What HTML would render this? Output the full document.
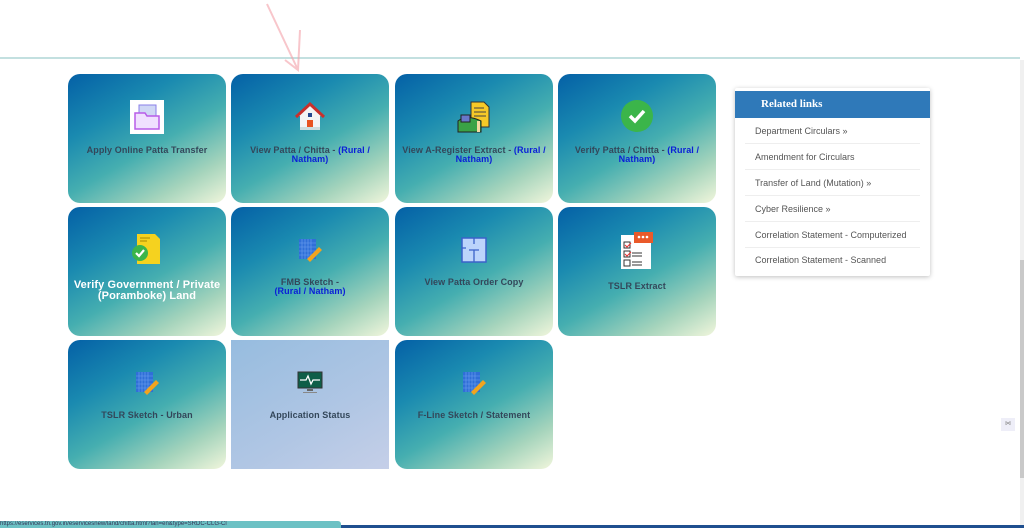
<!DOCTYPE html>
<html><head><meta charset="utf-8"><style>
*{margin:0;padding:0;box-sizing:border-box}
body{width:1024px;height:528px;background:#fff;position:relative;overflow:hidden;font-family:"Liberation Sans",Arial,sans-serif}
.topline{position:absolute;left:0;top:57px;width:1020px;height:2px;background:#c3e0e0}
.card{position:absolute;width:158px;height:129px;border-radius:12px;background:linear-gradient(150deg,#0460a6 0%,#1a8ab0 30%,#45aeb0 55%,#a6d4bc 80%,#f1f6dc 100%);text-align:center}
.card .ic{position:absolute;left:0;right:0;display:flex;justify-content:center}
.card .lb{position:absolute;left:4px;right:4px;font-size:9px;font-weight:bold;color:#33475a;line-height:9px;letter-spacing:.1px}
.b{color:#0a1fd8}
.status{background:linear-gradient(150deg,#96bcdf 0%,#b0c6e4 60%,#c5cfe8 100%);border-radius:0}
.panel{position:absolute;left:735px;top:88px;width:195px;height:188px;background:#fff;box-shadow:0 1px 5px rgba(0,0,0,.25);border-radius:2px}
.panel .hd{position:absolute;left:0;top:3px;width:195px;height:27px;background:#2f79b9;color:#fff;font-family:"Liberation Serif",serif;font-weight:bold;font-size:11px;line-height:27px;padding-left:26px}
.panel .it{position:absolute;left:10px;width:175px;height:26px;border-bottom:1px solid #eee;font-size:9px;color:#555;line-height:26px;padding-left:10px}
.sb{position:absolute;left:1020px;top:60px;width:4px;height:468px;background:#f0f0f0}
.sbt{position:absolute;left:1020px;top:260px;width:4px;height:218px;background:#c9c9c9}
</style></head><body>
<div class="topline"></div>
<svg style="position:absolute;left:255px;top:0" width="50" height="75"><path d="M12 4 L43 70 M45 30 L43 70 L30 60" stroke="#f3a0a8" stroke-width="2" fill="none" opacity=".6"/></svg>

<div class="card" style="left:68px;top:74px">
 <div class="ic" style="top:26px"><svg width="34" height="34"><rect width="34" height="34" fill="#fff"/><rect x="9" y="5" width="17" height="14" fill="#cfd7f5" stroke="#8a7fe8"/><path d="M5 13h10l2 3h12v13H5z" fill="#f0e0ff" stroke="#b85ce8" stroke-width="1.5"/></svg></div>
 <div class="lb" style="top:72px">Apply Online Patta Transfer</div>
</div>
<div class="card" style="left:231px;top:74px">
 <div class="ic" style="top:26px"><svg width="32" height="32"><path d="M16 4 L3 16 L6 16 L6 29 L26 29 L26 16 L29 16Z" fill="#f4f4f4"/><path d="M2 17 L16 4 L30 17" stroke="#c9302c" stroke-width="3" fill="none"/><rect x="13" y="20" width="6" height="9" fill="#e8531f"/><rect x="14" y="13" width="4" height="4" fill="#25478f"/><rect x="6" y="27" width="20" height="3" fill="#cdd"/></svg></div>
 <div class="lb" style="top:72px">View Patta / Chitta - <span class="b">(Rural / Natham)</span></div>
</div>
<div class="card" style="left:395px;top:74px">
 <div class="ic" style="top:25px"><svg width="34" height="34"><path d="M14 3h13l5 5v20H14z" fill="#f6c928" stroke="#333"/><path d="M17 9h10M17 13h12M17 17h12" stroke="#444"/><path d="M1 22 Q10 15 24 22 V33 H1Z" fill="#3aa246" stroke="#222"/><rect x="4" y="16" width="9" height="7" fill="#6877c9" stroke="#222"/><rect x="20" y="22" width="3" height="11" fill="#f3d9a0"/></svg></div>
 <div class="lb" style="top:72px">View A-Register Extract - <span class="b">(Rural / Natham)</span></div>
</div>
<div class="card" style="left:558px;top:74px">
 <div class="ic" style="top:25px"><svg width="34" height="34"><circle cx="17" cy="17" r="16" fill="#3bb54a"/><path d="M10 17 l5 5 l9-10" stroke="#fff" stroke-width="3.5" fill="none"/></svg></div>
 <div class="lb" style="top:72px">Verify Patta / Chitta - <span class="b">(Rural / Natham)</span></div>
</div>

<div class="card" style="left:68px;top:207px">
 <div class="ic" style="top:26px"><svg width="32" height="32"><path d="M6 1h18l5 5v25H6z" fill="#f5d21f"/><path d="M9 5h10M9 8h7" stroke="#a88a00"/><circle cx="9" cy="20" r="8" fill="#3bb54a"/><path d="M5 20l3 3l5-6" stroke="#fff" stroke-width="2.2" fill="none"/></svg></div>
 <div class="lb" style="top:73px;color:#fff;font-size:11px;line-height:11px">Verify Government / Private (Poramboke) Land</div>
</div>
<div class="card" style="left:231px;top:207px">
 <div class="ic" style="top:30px"><svg width="26" height="26"><rect x="2" y="2" width="17" height="20" fill="#2f6fd8"/><path d="M5 2v20M8 2v20M11 2v20M14 2v20M2 6h17M2 10h17M2 14h17M2 18h17" stroke="#6fa0ee" stroke-width=".6"/><path d="M10 22 L22 10 L25 13 L13 25Z" fill="#f2a41f"/></svg></div>
 <div class="lb" style="top:71px">FMB Sketch -<br><span class="b">(Rural / Natham)</span></div>
</div>
<div class="card" style="left:395px;top:207px">
 <div class="ic" style="top:29px"><svg width="28" height="28"><rect x="2" y="2" width="24" height="24" fill="#bcd4fb" stroke="#3b62c9" stroke-width="1.5"/><path d="M14 2v6M9 14h10M14 14v12M2 12h4" stroke="#3b62c9" stroke-width="1.3"/></svg></div>
 <div class="lb" style="top:71px">View Patta Order Copy</div>
</div>
<div class="card" style="left:558px;top:207px">
 <div class="ic" style="top:25px"><svg width="34" height="38"><rect x="1" y="3" width="30" height="34" fill="#fff"/><rect x="14" y="0" width="19" height="11" fill="#ea5a2a"/><circle cx="19" cy="5" r="1.3" fill="#fff"/><circle cx="23" cy="5" r="1.3" fill="#fff"/><circle cx="27" cy="5" r="1.3" fill="#fff"/><rect x="4" y="10" width="6" height="6" fill="none" stroke="#333"/><rect x="4" y="19" width="6" height="6" fill="none" stroke="#333"/><rect x="4" y="28" width="6" height="6" fill="none" stroke="#333"/><path d="M12 21h10M12 24h10M12 30h10M12 33h10" stroke="#333"/><path d="M5 13l2 2 4-4M5 22l2 2 4-4" stroke="#e33" fill="none"/></svg></div>
 <div class="lb" style="top:75px">TSLR Extract</div>
</div>

<div class="card" style="left:68px;top:340px">
 <div class="ic" style="top:30px"><svg width="26" height="26"><rect x="2" y="2" width="17" height="20" fill="#2f6fd8"/><path d="M5 2v20M8 2v20M11 2v20M14 2v20M2 6h17M2 10h17M2 14h17M2 18h17" stroke="#6fa0ee" stroke-width=".6"/><path d="M10 22 L22 10 L25 13 L13 25Z" fill="#f2a41f"/></svg></div>
 <div class="lb" style="top:71px">TSLR Sketch - Urban</div>
</div>
<div class="card status" style="left:231px;top:340px">
 <div class="ic" style="top:30px"><svg width="26" height="26"><rect x="1" y="2" width="24" height="16" fill="#0f5e48" stroke="#333"/><path d="M3 10h6l2-4 3 8 2-4h7" stroke="#fff" stroke-width="1.3" fill="none"/><rect x="10" y="19" width="6" height="2" fill="#666"/><rect x="6" y="22" width="14" height="1" fill="#888"/></svg></div>
 <div class="lb" style="top:71px">Application Status</div>
</div>
<div class="card" style="left:395px;top:340px">
 <div class="ic" style="top:30px"><svg width="26" height="26"><rect x="2" y="2" width="17" height="20" fill="#2f6fd8"/><path d="M5 2v20M8 2v20M11 2v20M14 2v20M2 6h17M2 10h17M2 14h17M2 18h17" stroke="#6fa0ee" stroke-width=".6"/><path d="M10 22 L22 10 L25 13 L13 25Z" fill="#f2a41f"/></svg></div>
 <div class="lb" style="top:71px">F-Line Sketch / Statement</div>
</div>

<div class="panel">
 <div class="hd">Related links</div>
 <div class="it" style="top:30px">Department Circulars »</div>
 <div class="it" style="top:56px">Amendment for Circulars</div>
 <div class="it" style="top:82px">Transfer of Land (Mutation) »</div>
 <div class="it" style="top:108px">Cyber Resilience »</div>
 <div class="it" style="top:134px">Correlation Statement - Computerized</div>
 <div class="it" style="top:159px;border:none">Correlation Statement - Scanned</div>
</div>

<div class="sb"></div><div class="sbt"></div>
<div style="position:absolute;left:1001px;top:418px;width:14px;height:13px;background:#eeeef8;font-size:6px;color:#888;text-align:center;line-height:13px">⋈</div>
<div style="position:absolute;left:0;top:521px;width:341px;height:7px;background:#6cc1c4;border-radius:0 3px 0 0;font-size:6px;color:#335;line-height:7px;white-space:nowrap;overflow:hidden">https://eservices.tn.gov.in/eservicesnew/land/chitta.html?lan=en&amp;type=SRDC-CLG-Cl</div>
<div style="position:absolute;left:341px;top:525px;width:683px;height:3px;background:#1f4f8f"></div>
</body></html>
